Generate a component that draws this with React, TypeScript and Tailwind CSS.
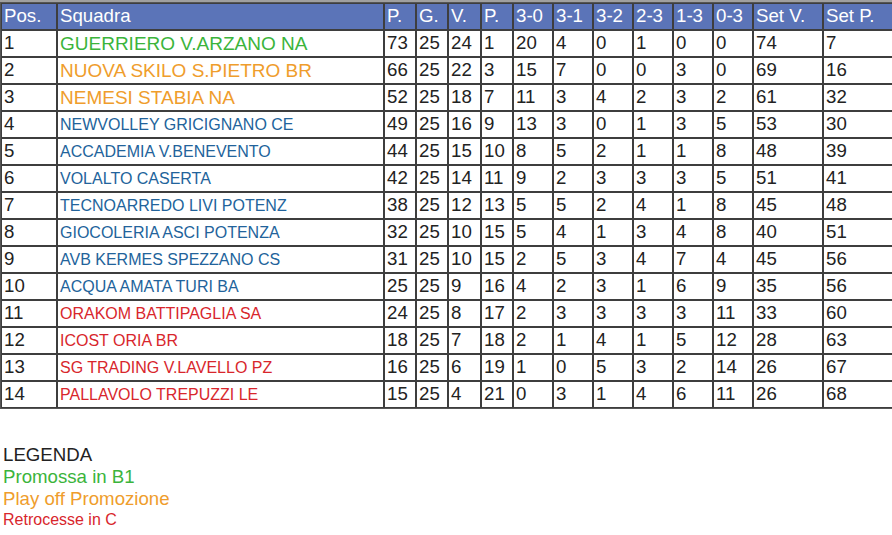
type Row = {
  pos: number;
  team: string;
  tone: "green" | "orange" | "blue" | "red";
  stats: number[];
};

const rows: Row[] = [
  { pos: 1, team: "GUERRIERO V.ARZANO NA", tone: "green", stats: [73, 25, 24, 1, 20, 4, 0, 1, 0, 0, 74, 7] },
  { pos: 2, team: "NUOVA SKILO S.PIETRO BR", tone: "orange", stats: [66, 25, 22, 3, 15, 7, 0, 0, 3, 0, 69, 16] },
  { pos: 3, team: "NEMESI STABIA NA", tone: "orange", stats: [52, 25, 18, 7, 11, 3, 4, 2, 3, 2, 61, 32] },
  { pos: 4, team: "NEWVOLLEY GRICIGNANO CE", tone: "blue", stats: [49, 25, 16, 9, 13, 3, 0, 1, 3, 5, 53, 30] },
  { pos: 5, team: "ACCADEMIA V.BENEVENTO", tone: "blue", stats: [44, 25, 15, 10, 8, 5, 2, 1, 1, 8, 48, 39] },
  { pos: 6, team: "VOLALTO CASERTA", tone: "blue", stats: [42, 25, 14, 11, 9, 2, 3, 3, 3, 5, 51, 41] },
  { pos: 7, team: "TECNOARREDO LIVI POTENZ", tone: "blue", stats: [38, 25, 12, 13, 5, 5, 2, 4, 1, 8, 45, 48] },
  { pos: 8, team: "GIOCOLERIA ASCI POTENZA", tone: "blue", stats: [32, 25, 10, 15, 5, 4, 1, 3, 4, 8, 40, 51] },
  { pos: 9, team: "AVB KERMES SPEZZANO CS", tone: "blue", stats: [31, 25, 10, 15, 2, 5, 3, 4, 7, 4, 45, 56] },
  { pos: 10, team: "ACQUA AMATA TURI BA", tone: "blue", stats: [25, 25, 9, 16, 4, 2, 3, 1, 6, 9, 35, 56] },
  { pos: 11, team: "ORAKOM BATTIPAGLIA SA", tone: "red", stats: [24, 25, 8, 17, 2, 3, 3, 3, 3, 11, 33, 60] },
  { pos: 12, team: "ICOST ORIA BR", tone: "red", stats: [18, 25, 7, 18, 2, 1, 4, 1, 5, 12, 28, 63] },
  { pos: 13, team: "SG TRADING V.LAVELLO PZ", tone: "red", stats: [16, 25, 6, 19, 1, 0, 5, 3, 2, 14, 26, 67] },
  { pos: 14, team: "PALLAVOLO TREPUZZI LE", tone: "red", stats: [15, 25, 4, 21, 0, 3, 1, 4, 6, 11, 26, 68] },
];

const headers = ["Pos.", "Squadra", "P.", "G.", "V.", "P.", "3-0", "3-1", "3-2", "2-3", "1-3", "0-3", "Set V.", "Set P."];
const widths = ["w-[56px]", "w-[327px]", "w-[32px]", "w-[32px]", "w-[33px]", "w-[32px]", "w-[40px]", "w-[40px]", "w-[40px]", "w-[40px]", "w-[40px]", "w-[40px]", "w-[70px]", "w-[70px]"];

const teamClass = {
  green: "text-[#3bb43b] text-[19px]",
  orange: "text-[#ef9d2c] text-[19px]",
  blue: "text-[#22639b] text-[16px]",
  red: "text-[#d8262c] text-[16px]",
};

const cell = "border border-[#3e3e3e] px-[2px] py-0 h-[27px] align-middle text-left whitespace-nowrap overflow-hidden";

export default function App() {
  return (
    <div className="w-[892px] h-[535px] bg-white overflow-hidden font-['Liberation_Sans',Arial,sans-serif] text-[#222]">
      <div className="h-[2px] bg-[#a0a0a0]" />
      <table className="table-fixed border-separate border-spacing-0 border border-[#555] w-[892px]">
        <colgroup>
          {widths.map((w, i) => (
            <col key={i} className={w} />
          ))}
        </colgroup>
        <thead>
          <tr className="bg-[#5b74b8] text-white text-[18.67px] leading-none">
            {headers.map((h, i) => (
              <th key={i} className={`${cell} font-normal`}>
                {h}
              </th>
            ))}
          </tr>
        </thead>
        <tbody>
          {rows.map((r) => (
            <tr key={r.pos} className="leading-none">
              <td className={`${cell} text-[18.67px]`}>{r.pos}</td>
              <td className={`${cell} ${teamClass[r.tone]}`}>{r.team}</td>
              {r.stats.map((s, i) => (
                <td key={i} className={`${cell} text-[18.67px]`}>
                  {s}
                </td>
              ))}
            </tr>
          ))}
        </tbody>
      </table>
      <div className="mt-[35px] pl-[3px]">
        <div className="text-[18.67px] leading-[22px] text-[#222]">LEGENDA</div>
        <div className="text-[18.67px] leading-[22px] text-[#3bb43b]">Promossa in B1</div>
        <div className="text-[18.67px] leading-[22px] text-[#ef9d2c]">Play off Promozione</div>
        <div className="text-[16px] leading-[20px] text-[#d8262c]">Retrocesse in C</div>
      </div>
    </div>
  );
}
